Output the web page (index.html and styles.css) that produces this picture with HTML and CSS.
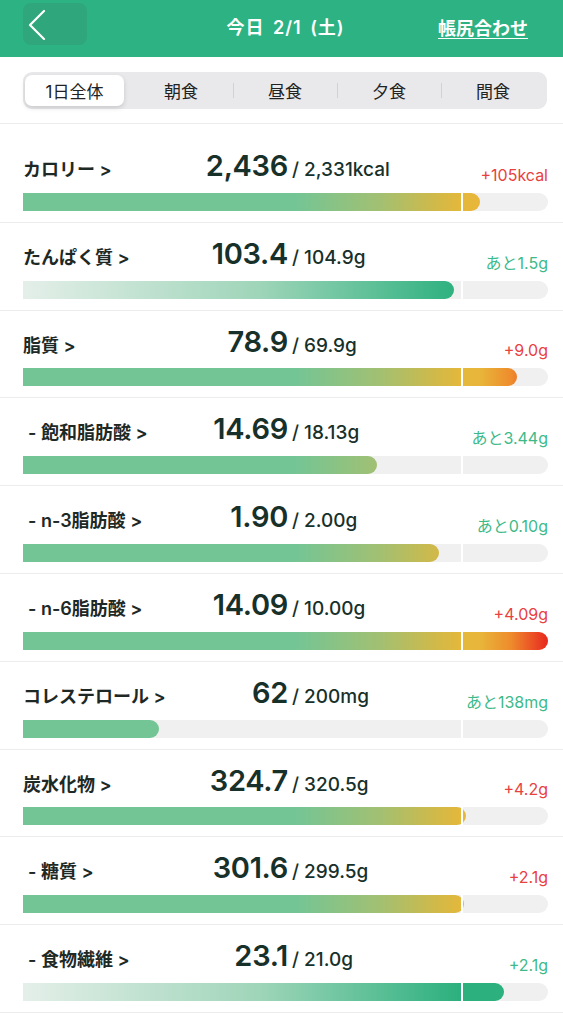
FILE: index.html
```html
<!DOCTYPE html>
<html lang="ja">
<head>
    <meta charset="UTF-8">
    <meta name="viewport" content="width=device-width, initial-scale=1.0">
    <title>今日 2/1 (土)</title>
    <link rel="stylesheet" href="styles.css">
</head>
<body>
    <header class="topbar">
        <button class="back-btn" type="button" aria-label="戻る">
            <svg width="20" height="32" viewBox="0 0 20 32"><polyline points="18,3 4,17 18,31" fill="none" stroke="#fff" stroke-width="2.2" stroke-linecap="round" stroke-linejoin="round"/></svg>
        </button>
        <div class="title">今日 2/1 (土)</div>
        <a class="adjust-link" href="#">帳尻合わせ</a>
    </header>

    <!-- 食事区分 -->
    <nav class="tabs">
        <div class="segmented">
            <span class="seg active">1日全体</span>
            <span class="seg">朝食</span>
            <span class="seg">昼食</span>
            <span class="seg">夕食</span>
            <span class="seg">間食</span>
        </div>
    </nav>

    <!-- 栄養素リスト -->
    <main class="nutrients">
        <section class="row">
            <div class="head">
                <span class="label">カロリー &gt;</span>
                <span class="amount">2,436</span>
                <span class="target">/ 2,331kcal</span>
                <span class="remain over">+105kcal</span>
            </div>
            <div class="track"><div class="fill upper" style="--p:87.09"></div><i class="mark"></i></div>
        </section>
        <section class="row">
            <div class="head">
                <span class="label">たんぱく質 &gt;</span>
                <span class="amount">103.4</span>
                <span class="target">/ 104.9g</span>
                <span class="remain ok">あと1.5g</span>
            </div>
            <div class="track"><div class="fill lower" style="--p:82.14"></div><i class="mark"></i></div>
        </section>
        <section class="row">
            <div class="head">
                <span class="label">脂質 &gt;</span>
                <span class="amount">78.9</span>
                <span class="target">/ 69.9g</span>
                <span class="remain over">+9.0g</span>
            </div>
            <div class="track"><div class="fill upper" style="--p:94.06"></div><i class="mark"></i></div>
        </section>
        <section class="row">
            <div class="head">
                <span class="label sub">- 飽和脂肪酸 &gt;</span>
                <span class="amount">14.69</span>
                <span class="target">/ 18.13g</span>
                <span class="remain ok">あと3.44g</span>
            </div>
            <div class="track"><div class="fill upper" style="--p:67.52"></div><i class="mark"></i></div>
        </section>
        <section class="row">
            <div class="head">
                <span class="label sub">- n-3脂肪酸 &gt;</span>
                <span class="amount">1.90</span>
                <span class="target">/ 2.00g</span>
                <span class="remain ok">あと0.10g</span>
            </div>
            <div class="track"><div class="fill upper" style="--p:79.17"></div><i class="mark"></i></div>
        </section>
        <section class="row">
            <div class="head">
                <span class="label sub">- n-6脂肪酸 &gt;</span>
                <span class="amount">14.09</span>
                <span class="target">/ 10.00g</span>
                <span class="remain over">+4.09g</span>
            </div>
            <div class="track"><div class="fill upper" style="--p:100"></div><i class="mark"></i></div>
        </section>
        <section class="row">
            <div class="head">
                <span class="label">コレステロール &gt;</span>
                <span class="amount">62</span>
                <span class="target">/ 200mg</span>
                <span class="remain ok">あと138mg</span>
            </div>
            <div class="track"><div class="fill upper" style="--p:25.83"></div><i class="mark"></i></div>
        </section>
        <section class="row">
            <div class="head">
                <span class="label">炭水化物 &gt;</span>
                <span class="amount">324.7</span>
                <span class="target">/ 320.5g</span>
                <span class="remain over">+4.2g</span>
            </div>
            <div class="track"><div class="fill upper" style="--p:84.43"></div><i class="mark"></i></div>
        </section>
        <section class="row">
            <div class="head">
                <span class="label sub">- 糖質 &gt;</span>
                <span class="amount">301.6</span>
                <span class="target">/ 299.5g</span>
                <span class="remain over">+2.1g</span>
            </div>
            <div class="track"><div class="fill upper" style="--p:83.92"></div><i class="mark"></i></div>
        </section>
        <section class="row">
            <div class="head">
                <span class="label sub">- 食物繊維 &gt;</span>
                <span class="amount">23.1</span>
                <span class="target">/ 21.0g</span>
                <span class="remain ok">+2.1g</span>
            </div>
            <div class="track"><div class="fill lower" style="--p:91.67"></div><i class="mark"></i></div>
        </section>
    </main>
</body>
</html>
```

FILE: styles.css
```css
body {
    margin: 0;
    background: #fff;
    font-family: Inter, "Noto Sans CJK JP", sans-serif;
    color: #1b2a24;
}
.topbar {
    height: 57px;
    background: #2db283;
    display: grid;
    grid-template-columns: 1fr auto 1fr;
    align-items: center;
    padding: 0 15px 0 23px;
    color: #fff;
}
.back-btn {
    justify-self: start;
    width: 64px;
    height: 42px;
    margin-top: -9px;
    border: none;
    border-radius: 8px;
    background: rgba(70, 70, 70, 0.1);
    display: flex;
    align-items: center;
    padding: 0 0 0 3px;
}
.title {
    font-size: 18px;
    font-weight: 600;
    letter-spacing: 1px;
    word-spacing: 3px;
    margin-top: -5px;
}
.adjust-link {
    justify-self: end;
    margin-right: 20px;
    margin-top: -4px;
    color: #fff;
    font-size: 18px;
    font-weight: 600;
    text-decoration: underline;
    text-underline-offset: 3px;
}
.tabs {
    padding: 15px 16px 14px 23px;
    border-bottom: 1px solid #ececec;
}
.segmented {
    height: 37px;
    box-sizing: border-box;
    background: #e9e9eb;
    border-radius: 9px;
    padding: 3px 2px;
    display: grid;
    grid-template-columns: repeat(5, 1fr);
}
.seg {
    display: flex;
    align-items: center;
    justify-content: center;
    font-size: 17px;
    color: #222;
    position: relative;
}
.seg + .seg::before {
    content: "";
    position: absolute;
    left: 0;
    top: 8px;
    bottom: 8px;
    width: 1px;
    background: #d2d2d6;
}
.seg.active + .seg::before,
.seg:nth-child(2)::before {
    display: none;
}
.seg.active {
    background: #fff;
    border-radius: 7px;
    margin-right: 5px;
    box-shadow: 0 2px 5px rgba(0, 0, 0, 0.14);
}
.row {
    padding: 0 15px 11px 23px;
    border-bottom: 1px solid #ececec;
}
.row:first-child {
    padding-top: 11px;
}
.head {
    height: 57.8px;
    box-sizing: border-box;
    padding-top: 17px;
    display: grid;
    grid-template-columns: 165px 100px 1fr auto;
    align-items: baseline;
}
.label {
    font-size: 18px;
    font-weight: 600;
    color: #1e2925;
    white-space: nowrap;
}
.label.sub {
    padding-left: 5px;
}
.amount {
    text-align: right;
    font-size: 29px;
    line-height: 28px;
    font-weight: 600;
    color: #17302a;
    letter-spacing: -0.3px;
}
.target {
    margin-left: 4px;
    font-size: 19px;
    font-weight: 500;
    color: #17302a;
}
.remain {
    align-self: end;
    margin-bottom: 10px;
    font-size: 16px;
    line-height: 16px;
}
.remain.over { color: #e8413e; }
.remain.ok { color: #3dba89; }
.track {
    position: relative;
    height: 18px;
    background: #f0f0f1;
    border-radius: 0 9px 9px 0;
}
.fill {
    height: 100%;
    width: calc(var(--p) * 1%);
    border-radius: 0 9px 9px 0;
    background-size: calc(10000% / var(--p)) 100%;
    background-repeat: no-repeat;
}
.fill.upper {
    background-image: linear-gradient(90deg, #74c595 0%, #74c595 52%, #a2c072 68%, #d2b948 79%, #e4b83b 83.5%, #e8b63a 87%, #ee8b2c 93%, #e8271f 100%);
}
.fill.lower {
    background-image: linear-gradient(90deg, #e4efe9 0%, #9fd5b9 45%, #2cb07e 83.3%, #2cb07e 100%);
}
.mark {
    position: absolute;
    top: 0;
    bottom: 0;
    left: calc(83.6% - 1px);
    width: 2px;
    background: #fff;
}
```
